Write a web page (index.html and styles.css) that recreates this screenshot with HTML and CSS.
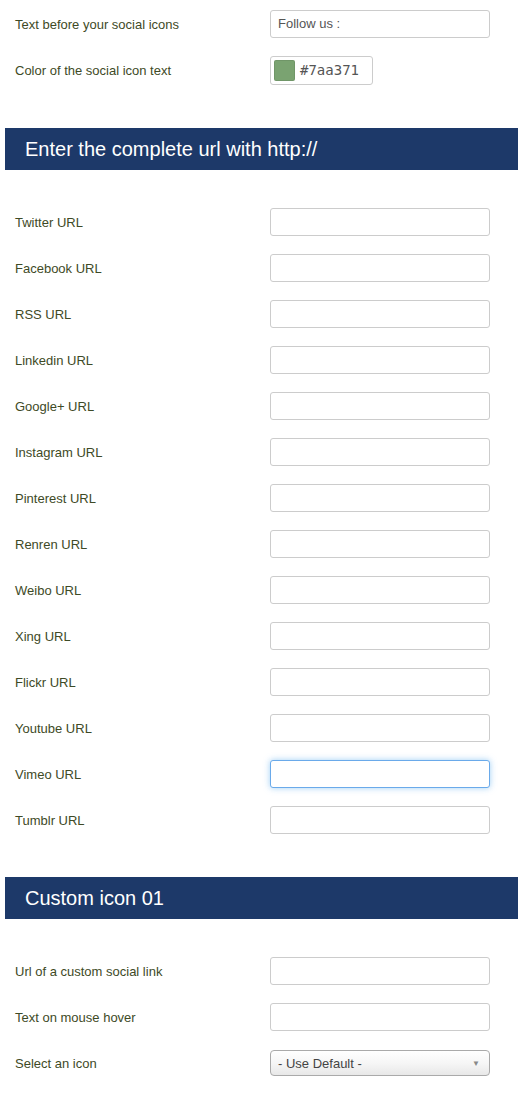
FILE: index.html
```html
<!DOCTYPE html>
<html>
<head>
<meta charset="utf-8">
<link rel="stylesheet" href="styles.css">
</head>
<body>
<div class="page">
  <div class="group first">
    <div class="row"><label class="lbl">Text before your social icons</label><div class="field">Follow us :</div></div>
    <div class="row"><label class="lbl">Color of the social icon text</label><div class="color"><span class="swatch"></span><span class="hex">#7aa371</span></div></div>
  </div>
  <h2 class="section">Enter the complete url with http://</h2>
  <div class="group">
    <div class="row"><label class="lbl">Twitter URL</label><div class="field"></div></div>
    <div class="row"><label class="lbl">Facebook URL</label><div class="field"></div></div>
    <div class="row"><label class="lbl">RSS URL</label><div class="field"></div></div>
    <div class="row"><label class="lbl">Linkedin URL</label><div class="field"></div></div>
    <div class="row"><label class="lbl">Google+ URL</label><div class="field"></div></div>
    <div class="row"><label class="lbl">Instagram URL</label><div class="field"></div></div>
    <div class="row"><label class="lbl">Pinterest URL</label><div class="field"></div></div>
    <div class="row"><label class="lbl">Renren URL</label><div class="field"></div></div>
    <div class="row"><label class="lbl">Weibo URL</label><div class="field"></div></div>
    <div class="row"><label class="lbl">Xing URL</label><div class="field"></div></div>
    <div class="row"><label class="lbl">Flickr URL</label><div class="field"></div></div>
    <div class="row"><label class="lbl">Youtube URL</label><div class="field"></div></div>
    <div class="row"><label class="lbl">Vimeo URL</label><div class="field focus"></div></div>
    <div class="row"><label class="lbl">Tumblr URL</label><div class="field"></div></div>
  </div>
  <h2 class="section">Custom icon 01</h2>
  <div class="group">
    <div class="row"><label class="lbl">Url of a custom social link</label><div class="field"></div></div>
    <div class="row"><label class="lbl">Text on mouse hover</label><div class="field"></div></div>
    <div class="row"><label class="lbl">Select an icon</label><div class="select"><span>- Use Default -</span><span class="arrow">&#9660;</span></div></div>
  </div>
</div>
</body>
</html>
```
FILE: styles.css
```css
html, body {
  margin: 0;
  padding: 0;
  background: #ffffff;
}
body {
  font-family: "Liberation Sans", Arial, sans-serif;
  font-size: 13px;
  color: #3d4a28;
}
.page {
  padding-left: 5px;
}
.group {
  display: flex;
  flex-direction: column;
  gap: 18px;
  padding-top: 38px;
  padding-bottom: 43px;
}
.group.first {
  padding-top: 10px;
  padding-bottom: 44px;
}
.row {
  display: flex;
  align-items: center;
  height: 28px;
  padding-left: 10px;
}
.lbl {
  width: 255px;
  color: #3e4a26;
  font-size: 13px;
}
.field {
  box-sizing: border-box;
  width: 220px;
  height: 28px;
  border: 1px solid #cccccc;
  border-radius: 3px;
  background: #fff;
  padding-left: 7px;
  line-height: 26px;
  color: #555;
  font-size: 13px;
}
.field.focus {
  border-color: #6aaaea;
  box-shadow: 0 0 6px rgba(82, 168, 236, 0.55);
}
.color {
  box-sizing: border-box;
  width: 103px;
  height: 29px;
  border: 1px solid #cccccc;
  border-radius: 3px;
  display: flex;
  align-items: center;
  padding-left: 3px;
  gap: 5px;
}
.swatch {
  width: 21px;
  height: 21px;
  background: #7aa371;
  border-radius: 2px;
  box-shadow: inset 0 0 0 1px rgba(0,0,0,0.08);
}
.hex {
  font-family: "DejaVu Sans Mono", monospace;
  font-size: 14px;
  color: #555;
}
.section {
  margin: 0;
  height: 42px;
  background: #1d3969;
  color: #ffffff;
  font-weight: normal;
  font-size: 20px;
  line-height: 42px;
  padding-left: 20px;
}
.select {
  box-sizing: border-box;
  width: 220px;
  height: 26px;
  border: 1px solid #aaaaaa;
  border-radius: 4px;
  background: linear-gradient(#ffffff, #f6f6f6 50%, #e8e8e8);
  display: flex;
  align-items: center;
  justify-content: space-between;
  padding: 0 9px 0 7px;
  color: #444;
  font-size: 13px;
}
.arrow {
  font-size: 8px;
  color: #888;
}
```
